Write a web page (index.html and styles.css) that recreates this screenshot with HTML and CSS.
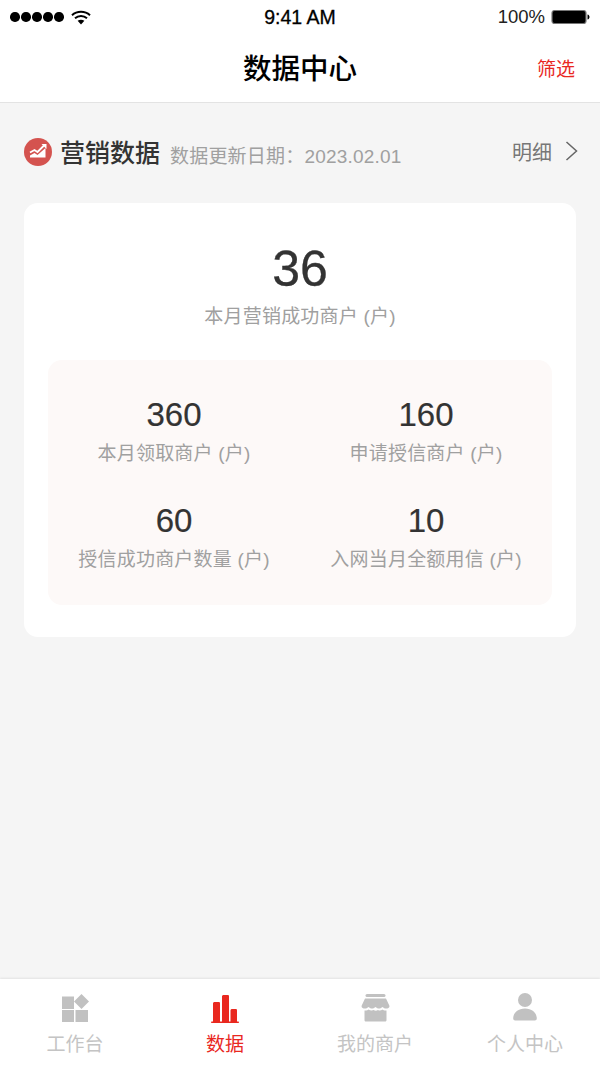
FILE: index.html
```html
<!DOCTYPE html>
<html lang="zh-CN">
<head>
<meta charset="utf-8">
<title>数据中心</title>
<link rel="stylesheet" href="styles.css">
</head>
<body>
<div class="app">
  <header class="top">
    <div class="status">
      <div class="status-left">
        <div class="dots"><i></i><i></i><i></i><i></i><i></i></div>
        <svg class="wifi" width="20" height="15" viewBox="0 0 20 15"><path d="M1 5.2C6 .6 14 .6 19 5.2" fill="none" stroke="#000" stroke-width="2"/><path d="M4 8.2c3.4-3 8.600-3 12 0" fill="none" stroke="#000" stroke-width="2"/><path d="M6.600 10.800 10 14.400l3.400-3.600c-2-1.500-4.800-1.500-6.800 0z" fill="#000"/></svg>
      </div>
      <div class="time">9:41 AM</div>
      <div class="status-right">
        <span class="pct">100%</span>
        <svg class="battery" width="39" height="16" viewBox="0 0 39 16"><rect x="1" y="1.500" width="34" height="13" rx="2.500" fill="#000" stroke="#777" stroke-width="1.200"/><path d="M36.500 5.500c1.400.3 2 1.300 2 2.500s-.6 2.200-2 2.500z" fill="#000"/></svg>
      </div>
    </div>
    <nav class="nav">
      <h1 class="nav-title">数据中心</h1>
      <span class="nav-action">筛选</span>
    </nav>
  </header>

  <main class="content">
    <div class="section-head">
      <svg class="section-icon" width="28" height="28" viewBox="0 0 28 28"><circle cx="14" cy="14" r="14" fill="#d4534f"/><path d="M6 14.500l4.500-2.500 3 2 6.500-6.500" fill="none" stroke="#fff" stroke-width="1.800"/><path d="M17.500 6h5v5z" fill="#fff"/><path d="M6 17.500l4.500-2.500 3 2 8-7v9.500H6z" fill="#fff"/></svg>
      <h2 class="section-title">营销数据</h2>
      <span class="section-date">数据更新日期：2023.02.01</span>
      <a class="section-link">明细<svg width="14" height="22" viewBox="0 0 14 22"><path d="M2.500 2l10 9-10 9" fill="none" stroke="#666" stroke-width="1.500"/></svg></a>
    </div>

    <section class="card">
      <div class="hero">
        <div class="hero-num">36</div>
        <div class="hero-label">本月营销成功商户 (户)</div>
      </div>
      <div class="stats">
        <div class="stat"><div class="stat-num">360</div><div class="stat-label">本月领取商户 (户)</div></div>
        <div class="stat"><div class="stat-num">160</div><div class="stat-label">申请授信商户 (户)</div></div>
        <div class="stat"><div class="stat-num">60</div><div class="stat-label">授信成功商户数量 (户)</div></div>
        <div class="stat"><div class="stat-num">10</div><div class="stat-label">入网当月全额用信 (户)</div></div>
      </div>
    </section>
  </main>

  <footer class="tabs">
    <div class="tab">
      <svg width="30" height="30" viewBox="0 0 30 30"><rect x="2" y="3.500" width="12" height="12.500" fill="#c1c1c1"/><rect x="2" y="17" width="12" height="12" fill="#c1c1c1"/><rect x="15.500" y="17" width="12.500" height="12" fill="#c1c1c1"/><path d="M21.500 1 29 8.500 21.500 16 14 8.500z" fill="#c1c1c1"/></svg>
      <span>工作台</span>
    </div>
    <div class="tab active">
      <svg width="30" height="30" viewBox="0 0 30 30"><path d="M3 29V10.500C3 9.500 3.800 9 4.500 9H9c.6 0 1 .5 1 1.500V29zM12 29V3.500C12 2.500 12.800 2 13.500 2H18c.6 0 1 .5 1 1.500V29zM20.500 29V17.500c0-1 .8-1.500 1.500-1.500h4c.6 0 1 .5 1 1.500V29z" fill="#e9281f"/><rect x="1" y="28.500" width="28" height="1.500" rx=".7" fill="#e9281f"/></svg>
      <span>数据</span>
    </div>
    <div class="tab">
      <svg width="30" height="30" viewBox="0 0 30 30"><rect x="5.500" y="1" width="20" height="3" rx="1.500" fill="#c1c1c1"/><path d="M5 5.500h21l3.500 7.500c0 2-1.700 2.500-3.500 2.500-1.700 0-2.500-.6-3.500-1.500-1 .9-2 1.500-3.500 1.500s-2.600-.6-3.500-1.500c-.9.900-2 1.500-3.500 1.500s-2.500-.6-3.500-1.500c-1 .9-1.800 1.500-3.500 1.500-1.800 0-3.500-.5-3.500-2.500z" fill="#c1c1c1"/><path d="M4.500 17.500c2 .3 3-.3 4-1 1.500 1 3.500 1.300 5.200.5 1.300 1 2.900 1 4.300 0 1.500.8 3 .7 4.500-.5 1 .7 2 1.300 4 1V27c0 1-.7 1.500-1.500 1.500H6C5.200 28.500 4.500 28 4.500 27z" fill="#c1c1c1"/></svg>
      <span>我的商户</span>
    </div>
    <div class="tab">
      <svg width="30" height="30" viewBox="0 0 30 30"><circle cx="15" cy="7" r="7" fill="#c1c1c1"/><path d="M3.200 25.500c0-6 5.300-10 11.800-10s11.800 4 11.800 10c0 1.200-.8 2-2 2H5.200c-1.200 0-2-.8-2-2z" fill="#c1c1c1"/></svg>
      <span>个人中心</span>
    </div>
  </footer>
</div>
</body>
</html>
```
FILE: styles.css
```css
* { box-sizing: border-box; }
html, body { margin: 0; height: 100%; }
body {
  font-family: "Liberation Sans", "Noto Sans CJK SC", sans-serif;
  background: #f5f5f5;
}
.app { display: flex; flex-direction: column; height: 1067px; }

.top { background: #fff; border-bottom: 1px solid #e3e3e3; height: 103px; }
.status {
  height: 34px; display: flex; align-items: center; justify-content: space-between;
  padding: 0 10px; position: relative;
}
.status-left { display: flex; align-items: center; gap: 7px; }
.dots { display: flex; gap: 1.600px; }
.dots i { width: 9.500px; height: 9.500px; border-radius: 50%; background: #000; }
.time {
  position: absolute; left: 0; right: 0; text-align: center;
  font-size: 19.500px; color: #000; -webkit-text-stroke: .3px #000;
}
.status-right { display: flex; align-items: center; gap: 6px; }
.pct { font-size: 18.500px; color: #222; }
.nav { position: relative; height: 68px; display: flex; align-items: center; justify-content: center; }
.nav-title { margin: 2px 0 0; font-size: 28.500px; font-weight: 500; color: #000; line-height: 68px; }
.nav-action {
  position: absolute; right: 25px; top: 2px; line-height: 68px;
  font-size: 19px; color: #e9281f;
}

.content { flex: 1; padding: 0 24px; }
.section-head { height: 100px; display: flex; align-items: center; }
.section-icon { margin: 0 8px 2px 0; }
.section-title { margin: 0 0 4px; font-size: 25px; font-weight: 500; color: #333; }
.section-date { margin-left: 10px; font-size: 19px; letter-spacing: .2px; color: #a0a0a0; padding-top: 2px; }
.section-link {
  margin-left: auto; display: flex; align-items: center; gap: 12px;
  font-size: 20px; color: #777; margin-bottom: 4px; margin-right: -2px;
}

.card { background: #fff; border-radius: 14px; padding: 0 24px 32px; height: 434px; }
.hero { text-align: center; padding-top: 38px; height: 157px; }
.hero-num { font-size: 50px; line-height: 56px; color: #333; -webkit-text-stroke: .3px #333; }
.hero-label { font-size: 19px; line-height: 28px; letter-spacing: .2px; color: #a0a0a0; margin-top: 6px; }
.stats {
  background: #fdf9f8; border-radius: 14px; height: 245px;
  display: grid; grid-template-columns: 1fr 1fr; padding: 36px 0 0 0;
  grid-auto-rows: 106px;
}
.stat { text-align: center; }
.stat-num { font-size: 33px; line-height: 38px; color: #333; -webkit-text-stroke: .2px #333; }
.stat-label { font-size: 19px; line-height: 28px; letter-spacing: .2px; color: #a0a0a0; margin-top: 6px; }

.tabs {
  height: 88px; background: #fff; display: grid; grid-template-columns: repeat(4, 1fr);
  box-shadow: 0 -1px 2px rgba(0,0,0,.08); padding-top: 14px;
}
.tab { display: flex; flex-direction: column; align-items: center; font-size: 19px; line-height: 28px; color: #c4c4c4; }
.tab span { margin-top: 8px; }
.tab.active { color: #e9281f; }
```
